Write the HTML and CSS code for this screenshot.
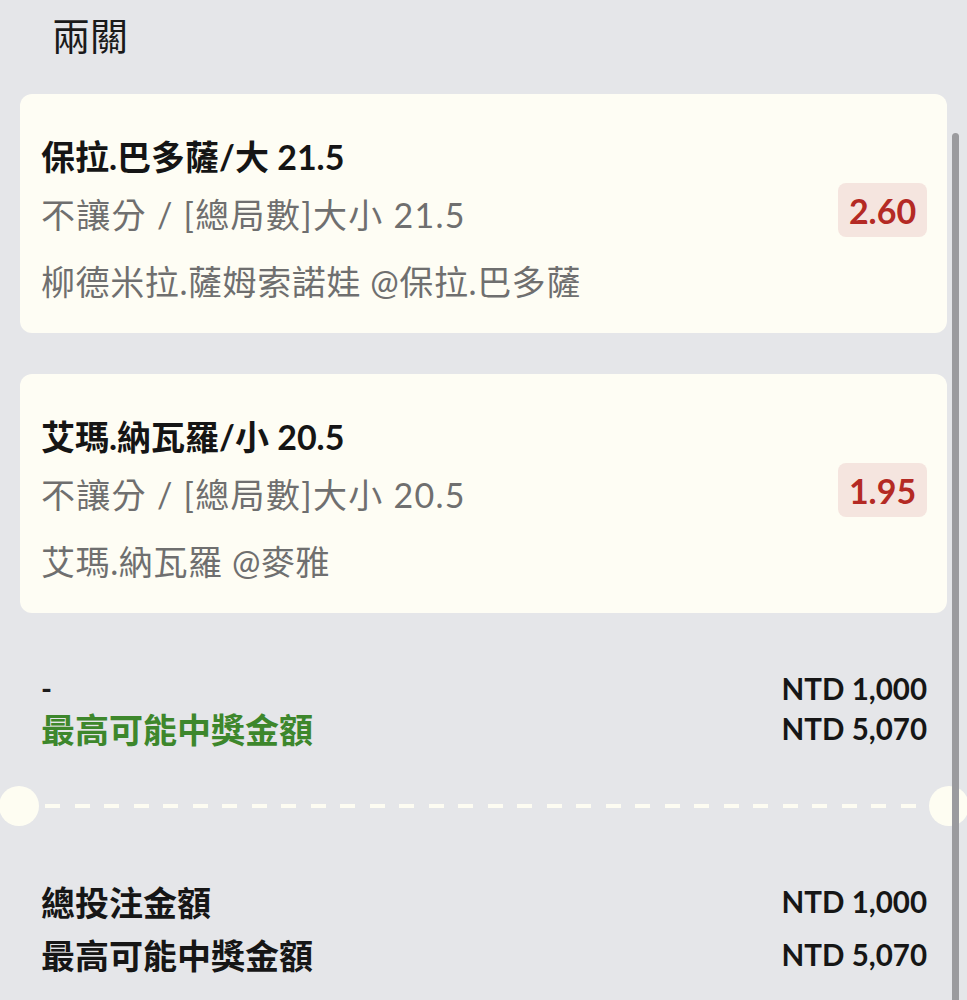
FILE: index.html
```html
<!DOCTYPE html>
<html lang="zh-Hant">
<head>
<meta charset="utf-8">
<link rel="stylesheet" href="styles.css">
</head>
<body>
<div class="page">
  <h1 class="heading">兩關</h1>

  <div class="card">
    <div class="card-info">
      <div class="sel-title">保拉.巴多薩/大 21.5</div>
      <div class="sel-market">不讓分 / [總局數]大小 21.5</div>
      <div class="sel-event">柳德米拉.薩姆索諾娃 @保拉.巴多薩</div>
    </div>
    <div class="odds">2.60</div>
  </div>

  <div class="card">
    <div class="card-info">
      <div class="sel-title">艾瑪.納瓦羅/小 20.5</div>
      <div class="sel-market">不讓分 / [總局數]大小 20.5</div>
      <div class="sel-event">艾瑪.納瓦羅 @麥雅</div>
    </div>
    <div class="odds">1.95</div>
  </div>

  <div class="summary">
    <div class="sum-row">
      <span class="sum-label">-</span>
      <span class="sum-value">NTD 1,000</span>
    </div>
    <div class="sum-row">
      <span class="sum-label green">最高可能中獎金額</span>
      <span class="sum-value">NTD 5,070</span>
    </div>
  </div>

  <div class="divider">
    <span class="notch notch-left"></span>
    <span class="dash-line"></span>
    <span class="notch notch-right"></span>
  </div>

  <div class="totals">
    <div class="tot-row">
      <span class="tot-label">總投注金額</span>
      <span class="tot-value">NTD 1,000</span>
    </div>
    <div class="tot-row">
      <span class="tot-label">最高可能中獎金額</span>
      <span class="tot-value">NTD 5,070</span>
    </div>
  </div>

  <div class="scrollbar"></div>
</div>
</body>
</html>
```
FILE: styles.css
```css
* { box-sizing: border-box; }
html, body {
  margin: 0;
  padding: 0;
  background: #e5e6e9;
}
body {
  font-family: Lato, "Noto Sans CJK TC", sans-serif;
  color: #1c1c1c;
  overflow: hidden;
}
.page {
  position: relative;
  width: 967px;
  height: 1000px;
  padding: 0 20px;
  overflow: hidden;
}
.heading {
  margin: 0;
  padding: 11px 0 0 32px;
  height: 94px;
  font-size: 38px;
  font-weight: 400;
  line-height: 48px;
  color: #1a1a1a;
}
.card {
  background: #fefdf4;
  border-radius: 12px;
  height: 239px;
  padding: 0 20px 0 21px;
  display: flex;
  align-items: center;
  justify-content: space-between;
  margin-bottom: 41px;
}
.card-info {
  display: flex;
  flex-direction: column;
  padding-top: 12px;
}
.sel-title {
  font-size: 34px;
  font-weight: 700;
  line-height: 40px;
  color: #151515;
}
.sel-market {
  margin-top: 18px;
  font-size: 34px;
  line-height: 40px;
  color: #6f6f6f;
  letter-spacing: 1.3px;
}
.sel-event {
  margin-top: 27px;
  font-size: 34px;
  line-height: 40px;
  color: #6f6f6f;
  letter-spacing: 0.6px;
}
.odds {
  background: #f5e5df;
  color: #b42a24;
  font-weight: 700;
  font-size: 34px;
  width: 89px;
  height: 54px;
  border-radius: 8px;
  display: flex;
  align-items: center;
  justify-content: center;
  margin-top: -7px;
}
.summary {
  padding: 14px 20px 0 21px;
  height: 132px;
}
.sum-row {
  display: flex;
  justify-content: space-between;
  align-items: center;
  height: 40px;
}
.sum-label, .sum-value {
  font-size: 29.5px;
  font-weight: 700;
}
.sum-value { color: #161616; }
.green { color: #3d872c; font-size: 34px; }
.divider {
  display: flex;
  align-items: center;
  height: 40px;
  margin: 0 -20px;
}
.notch {
  width: 40px;
  height: 40px;
  border-radius: 50%;
  background: #fefdf2;
  flex: none;
}
.notch-left { margin-left: -1px; }
.notch-right { margin-right: -2px; }
.dash-line {
  flex: 1;
  height: 4px;
  margin: 0 4px 0 6px;
  background: repeating-linear-gradient(90deg, #fdfcf2 0 15px, transparent 15px 29.5px);
}
.totals {
  padding: 49px 20px 0 21px;
}
.tot-row {
  display: flex;
  justify-content: space-between;
  align-items: center;
  height: 53px;
}
.tot-label {
  font-size: 34px;
  font-weight: 700;
  color: #161616;
}
.tot-value {
  font-size: 29.5px;
  font-weight: 700;
  color: #161616;
}
.scrollbar {
  position: absolute;
  left: 952px;
  top: 133px;
  width: 7px;
  height: 900px;
  border-radius: 4px;
  background: #9b9b9e;
}
```
